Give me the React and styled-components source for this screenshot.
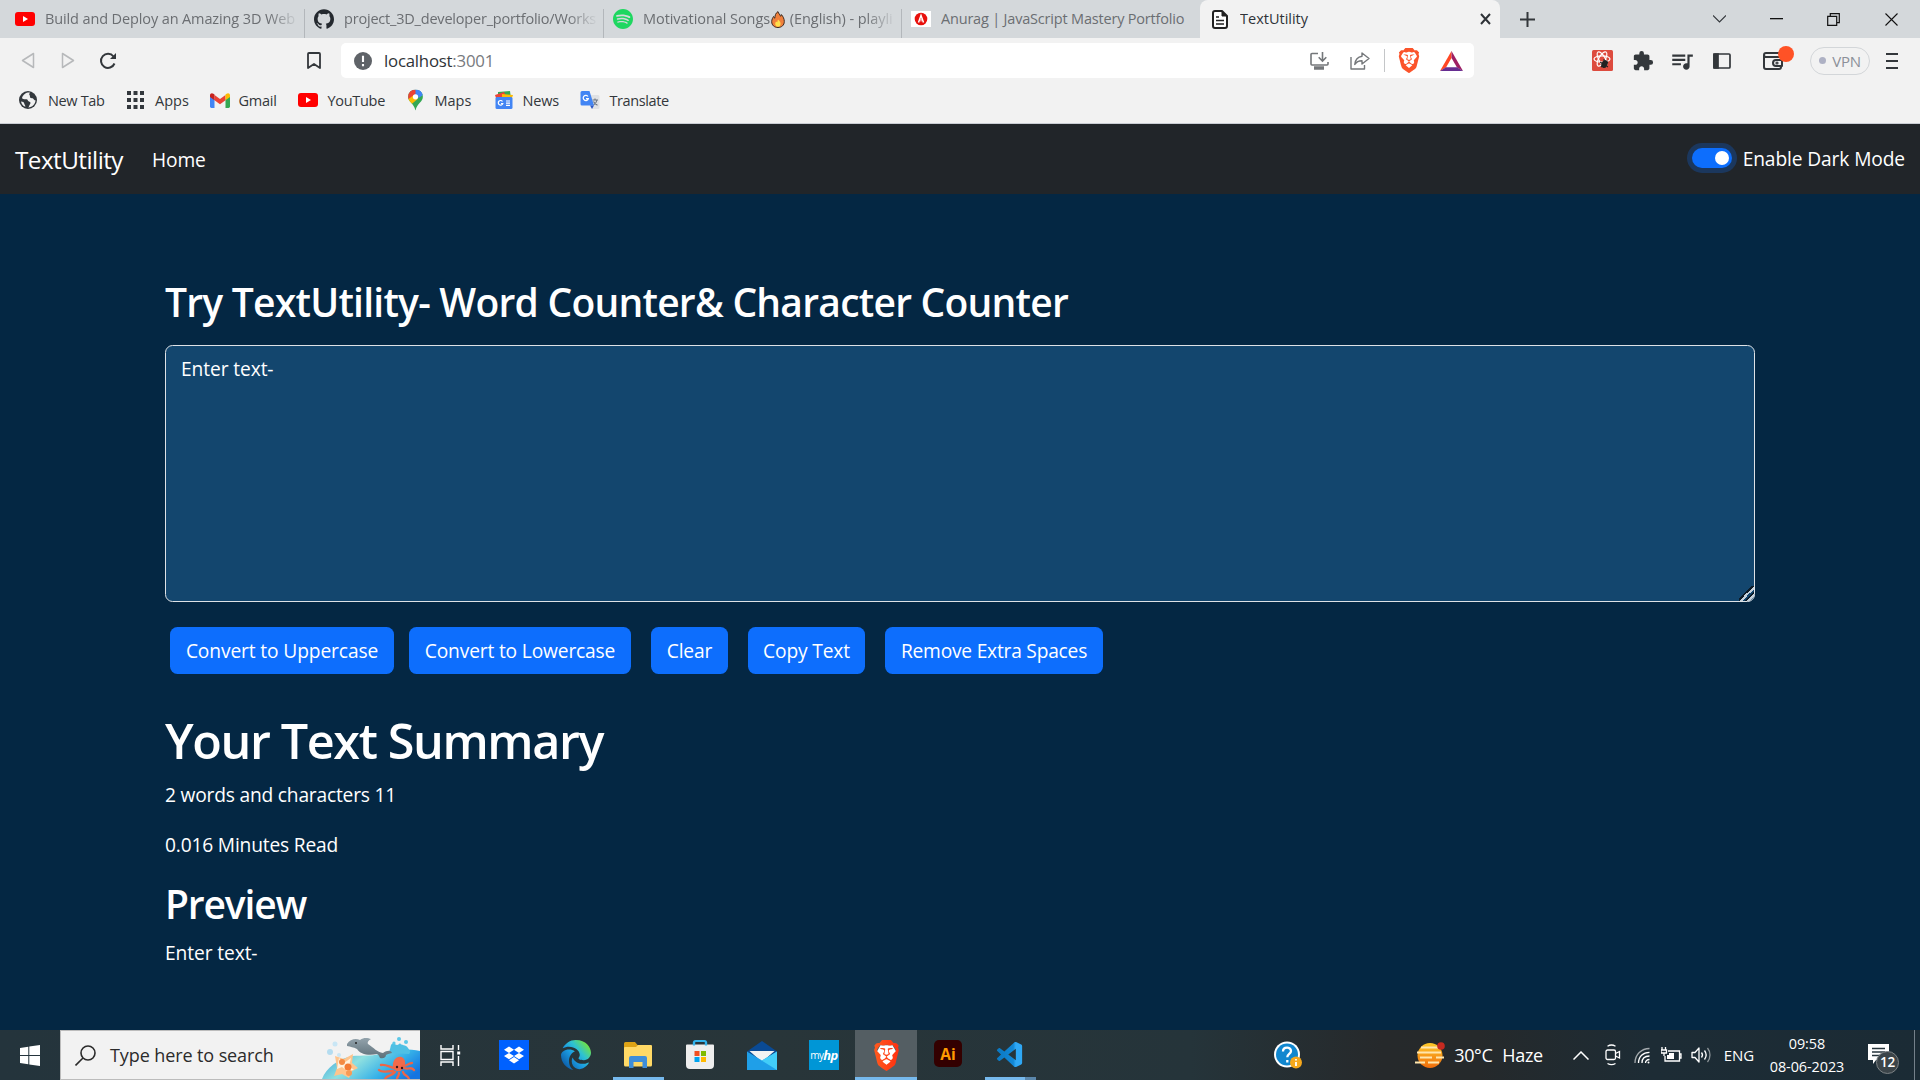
import React from "react";
import styled, { createGlobalStyle } from "styled-components";
import { SiBrave, SiGithub, SiSpotify, SiDropbox } from "react-icons/si";
import { FaEdge } from "react-icons/fa6";
import { VscVscode } from "react-icons/vsc";
import { MdExtension, MdQueueMusic } from "react-icons/md";

const GlobalStyle = createGlobalStyle`
  * { box-sizing: border-box; }
  html, body { margin: 0; padding: 0; }
  body {
    width: 1920px; height: 1080px; overflow: hidden; background: #042743;
    font-family: "Open Sans", "Noto Sans", sans-serif;
  }
  svg { display: block; flex: none; }
`;

const Screen = styled.div`
  width: 1920px;
  height: 1080px;
  display: flex;
  flex-direction: column;
  overflow: hidden;
`;

const Label = styled.span`
  font-size: ${(p) => p.$size}px;
  letter-spacing: ${(p) => p.$track || 0}px;
  color: ${(p) => p.$color || "inherit"};
  white-space: nowrap;
`;

/* ---------- browser chrome ---------- */

const Chrome = styled.header`
  height: 124px;
  flex: none;
  background: #f2f2f2;
  border-bottom: 1px solid #c9cdd3;
  color: #33373b;
`;

const TabStrip = styled.div`
  height: 38px;
  display: flex;
  background: #d4d8db;
`;

const Tab = styled.div`
  width: ${(p) => p.$width}px;
  flex: none;
  display: flex;
  align-items: center;
  gap: ${(p) => p.$gap || 10}px;
  padding: 0 ${(p) => p.$end || 5}px 0 ${(p) => p.$start}px;
  color: ${(p) => (p.$active ? "#2f3338" : "#6b6e72")};
  background: ${(p) => (p.$active ? "#f2f2f2" : "transparent")};
  border-radius: ${(p) => (p.$active ? "8px 8px 0 0" : "0")};
  overflow: hidden;
`;

const TabDivider = styled.i`
  width: 1px;
  height: 29px;
  margin: 9px -1px 0 0;
  background: #b3b7bb;
`;

const TabTitle = styled.div`
  flex: 1;
  min-width: 0;
  display: flex;
  align-items: center;
  overflow: hidden;
  font-size: 14.5px;
  line-height: 22px;
  letter-spacing: ${(p) => p.$track || 0}px;
  white-space: pre;
  mask-image: ${(p) => (p.$fade ? "linear-gradient(90deg, #000 88%, transparent)" : "none")};
`;

const WindowControls = styled.div`
  margin-left: auto;
  display: flex;
  align-items: center;
`;

const ControlSlot = styled.div`
  width: 57.3px;
  display: flex;
  justify-content: center;
`;

const NewTabButton = styled.div`
  display: flex;
  align-items: center;
`;

const Toolbar = styled.div`
  height: 45px;
  display: flex;
  align-items: center;
  padding-left: 21px;
`;

const Spacer = styled.i`
  flex: none;
  width: ${(p) => p.$w}px;
`;

const AddressBar = styled.div`
  width: 1133px;
  height: 35px;
  display: flex;
  align-items: center;
  padding: 0 11px 0 13px;
  background: #fff;
  border-radius: 5px;
`;

const AddressTools = styled.div`
  margin-left: auto;
  display: flex;
  align-items: center;
`;

const Separator = styled.i`
  width: 1px;
  height: 23px;
  background: #c4c6c8;
`;

const WalletButton = styled.div`
  position: relative;
`;

const WalletBadge = styled.i`
  position: absolute;
  left: 14.5px;
  top: -6px;
  width: 16px;
  height: 16px;
  border-radius: 50%;
  background: #ff5226;
`;

const VpnPill = styled.div`
  width: 60px;
  height: 28px;
  display: flex;
  align-items: center;
  justify-content: center;
  gap: 6px;
  border: 1.5px solid #d3d6d9;
  border-radius: 14px;
  color: #8b9099;
`;

const VpnDot = styled.i`
  width: 7px;
  height: 7px;
  border-radius: 50%;
  background: #aeb1c4;
`;

const BookmarksBar = styled.nav`
  height: 34px;
  display: flex;
  align-items: center;
  padding-left: 18px;
`;

const Bookmark = styled.div`
  width: ${(p) => p.$width}px;
  display: flex;
  align-items: center;
  gap: ${(p) => p.$gap || 9}px;
`;

/* ---------- page ---------- */

const Navbar = styled.nav`
  height: 70px;
  flex: none;
  display: flex;
  align-items: center;
  padding: 0 15px;
  background: #212529;
  color: #fff;
`;

const NavLink = styled.span`
  margin-right: 29px;
  font-size: ${(p) => p.$size}px;
  letter-spacing: ${(p) => p.$track}px;
`;

const ModeSwitch = styled.label`
  margin-left: auto;
  margin-bottom: 2px;
  display: flex;
  align-items: center;
  gap: 11px;
`;

const Track = styled.span`
  width: 40px;
  height: 20px;
  display: flex;
  justify-content: flex-end;
  align-items: center;
  padding-right: 3px;
  border-radius: 10px;
  background: #0d6efd;
  box-shadow: 0 0 0 5px rgba(13, 110, 253, 0.25);
`;

const Knob = styled.i`
  width: 14px;
  height: 14px;
  border-radius: 50%;
  background: #fff;
`;

const Content = styled.main`
  flex: 1;
  min-height: 0;
  padding: 84px 165px 0;
  color: #fff;
  background: #042743;
`;

const Heading = styled.h2`
  margin: 0 0 ${(p) => p.$after}px;
  height: ${(p) => p.$line}px;
  font-size: ${(p) => p.$size}px;
  line-height: ${(p) => p.$line}px;
  letter-spacing: ${(p) => p.$track}px;
  font-weight: 600;
  white-space: nowrap;
`;

const TextBox = styled.textarea`
  display: block;
  width: 1590px;
  height: 257px;
  margin: 0;
  padding: 7.5px 15px;
  border: 1px solid #dee2e6;
  border-radius: 7.5px;
  background: #13466e;
  color: #fff;
  font: 19.2px/30px "Open Sans", "Noto Sans", sans-serif;
  letter-spacing: -0.1px;
  outline: none;
  overflow: hidden;

  &::-webkit-resizer {
    background: linear-gradient(135deg, transparent 42%, #0c1a26 42% 50%, #c4d0da 50% 60%, #13466e 60% 68%, #0c1a26 68% 74%, #c4d0da 74% 86%, transparent 86%);
  }
`;

const ButtonRow = styled.div`
  display: flex;
  padding: 25px 0 35px 5px;
`;

const ActionButton = styled.button`
  width: ${(p) => p.$width}px;
  height: 47px;
  margin: 0 ${(p) => p.$after}px 0 0;
  padding: 0;
  border: 0;
  border-radius: 7.5px;
  background: #0d6efd;
  color: #fff;
  font: 19.2px/30px "Open Sans", "Noto Sans", sans-serif;
  letter-spacing: ${(p) => p.$track || 0}px;
  white-space: nowrap;
`;

const Line = styled.p`
  margin: 0 0 ${(p) => p.$after || 0}px;
  font-size: 19.2px;
  line-height: 30px;
  letter-spacing: ${(p) => p.$track || 0}px;
`;

/* ---------- taskbar ---------- */

const Taskbar = styled.footer`
  height: 50px;
  flex: none;
  display: flex;
  align-items: stretch;
  color: #fff;
  background: linear-gradient(90deg, #24343c 0%, #283539 40%, #25343a 62%, #26292b 72%, #25292b 77%, #1d2c35 86%, #1b2b35 100%);
`;

const StartButton = styled.div`
  width: 60px;
  display: flex;
  align-items: center;
  justify-content: center;
`;

const SearchBox = styled.div`
  width: 360px;
  display: flex;
  align-items: center;
  padding-left: 14px;
  background: #f2f2f2;
  border: 1px solid #bcbcbc;
  border-right: 0;
  color: #2b2b2b;
`;

const SearchArt = styled.div`
  margin-left: auto;
`;

const AppSlot = styled.div`
  width: 62px;
  display: flex;
  flex-direction: column;
  align-items: center;
  background: ${(p) => (p.$active ? "#545e63" : "transparent")};
`;

const AppIcon = styled.div`
  height: 47px;
  padding-top: 3px;
  display: flex;
  align-items: center;
`;

const Running = styled.i`
  width: ${(p) => p.$width}px;
  height: 3px;
  background: ${(p) => (p.$split ? "linear-gradient(90deg, #76b9ed 78%, #5b87ab 78%)" : "#76b9ed")};
`;

const HpTile = styled.div`
  width: 30px;
  height: 30px;
  display: flex;
  align-items: center;
  justify-content: center;
  background: #0096d6;
  font-size: 10px;
  letter-spacing: -0.6px;
  b { font-size: 13px; font-style: italic; }
`;

const AiTile = styled.div`
  width: 28px;
  height: 27px;
  margin-bottom: 3px;
  display: flex;
  align-items: center;
  justify-content: center;
  border-radius: 5px;
  background: #330000;
  color: #ff9a00;
  font-size: 15.5px;
  font-weight: 700;
`;

const Tray = styled.div`
  margin-left: auto;
  display: flex;
  align-items: center;
`;

const Clock = styled.div`
  width: 92px;
  display: flex;
  flex-direction: column;
  align-items: center;
  font-size: 14.4px;
  line-height: 23px;
  letter-spacing: -0.05px;
`;

const Notifications = styled.div`
  position: relative;
  width: 21px;
  margin-right: 25px;
  padding-bottom: 3px;
`;

const Count = styled.span`
  position: absolute;
  left: 8px;
  top: 7px;
  width: 23px;
  height: 23px;
  display: flex;
  align-items: center;
  justify-content: center;
  border-radius: 50%;
  border: 1px solid #7b8184;
  background: #3b4449;
  font-size: 13.5px;
  font-weight: 600;
  letter-spacing: -0.3px;
`;

const DesktopEdge = styled.i`
  align-self: stretch;
  width: 6px;
  border-left: 1px solid #74808a;
`;

/* ---------- drawings ---------- */

const YouTubeIcon = () => (
  <svg width="20" height="14" viewBox="0 0 20 14">
    <rect width="20" height="14" rx="3" fill="#f00" />
    <path d="M8 4l5 3-5 3z" fill="#fff" />
  </svg>
);

const FlameIcon = () => (
  <svg width="16" height="17" viewBox="-1 0 16 17">
    <path d="M7 .6c.6 2.2 2 3 2.600 4.700.5-.5.7-1.100.7-1.800 1.900 2 3 4.500 3 7 0 3.700-2.700 6-6.300 6S.700 14.200.700 10.700c0-2.300 1-3.800 1.800-5.200.3.800.7 1.300 1.300 1.700C3.900 4.700 4.600 2 7 .6z" fill="#f0803c" stroke="#3b2a20" strokeWidth="1" />
    <path d="M7 8.500c1.500 1.300 2.600 2.500 2.600 4.300S8.500 15.800 7 15.800s-2.800-1.200-2.800-3c0-1 .4-1.800 1-2.400.4.5.7.7 1.100.8.2-1 .3-1.800.7-2.700z" fill="#ffe04a" />
  </svg>
);

const PortfolioIcon = () => (
  <svg width="20" height="16" viewBox="0 0 20 16">
    <rect width="20" height="16" fill="#fff" />
    <circle cx="10" cy="8" r="6.300" fill="#e8100c" />
    <path d="M7.500 11.500L10 4.500l2.500 7" fill="none" stroke="#fff" strokeWidth="1.500" />
    <path d="M10 8v2.500" stroke="#fff" />
  </svg>
);

const FileIcon = () => (
  <svg width="16" height="19" viewBox="0 0 16 19" fill="none" stroke="#222" strokeWidth="2" strokeLinejoin="round">
    <path d="M10 1H3a2 2 0 0 0-2 2v13a2 2 0 0 0 2 2h10a2 2 0 0 0 2-2V6z" fill="#fff" />
    <path d="M10 1v5h5z" fill="#222" strokeWidth="1" />
    <path d="M4 7h3M4 10.500h8M4 14h8" strokeWidth="1.600" />
  </svg>
);

const GlobeIcon = () => (
  <svg width="20" height="20" viewBox="0 0 20 20">
    <circle cx="10" cy="10" r="9" fill="#33383d" />
    <path d="M11 2.500c-3 0-6 2-7 5.500 1 1.500 3 1.200 4.500 1.200C10 9.200 9.500 11 11 11.500c1.500.4 2 1.500 1 2.800-.8 1-.6 2.200-1.800 3.100 4-.1 7.200-3.200 7.300-7.200-1.200 0-1.800-.6-2.200-1.500-.5-.9-2.300-.3-3-1-.8-.9.1-1.800-.7-2.500-.7-.7-.3-1.700.4-2.700z" fill="#f2f2f2" />
    <path d="M3 11.500c2 0 3 .8 3.300 2.200.3 1.200 1.200 1.500 1 3.100C5 16 3.400 14 3 11.500z" fill="#f2f2f2" />
  </svg>
);

const AppsGrid = () => (
  <svg width="20" height="20" viewBox="0 0 20 20" fill="#33383d">
    {[1, 8, 15].map((y) => [1, 7.500, 14].map((x) => <rect key={x + "-" + y} x={x} y={y} width="4" height="4" />))}
  </svg>
);

const GmailIcon = () => (
  <svg width="20" height="15" viewBox="0 0 20 15">
    <path d="M0 2.500V13.500A1.400 1.400 0 0 0 1.400 15H4.500V6z" fill="#4285f4" />
    <path d="M20 2.500V13.500A1.400 1.400 0 0 1 18.600 15H15.500V6z" fill="#34a853" />
    <path d="M4.500 2v5.200L10 11.300l5.500-4.100V2L10 6.100z" fill="#ea4335" />
    <path d="M0 2.200C0 .3 2-.5 3.400.7L4.500 1.600v5.600L0 3.900z" fill="#c5221f" />
    <path d="M20 2.200C20 .3 18-.5 16.600.7l-1.100.9v5.600L20 3.900z" fill="#fbbc04" />
  </svg>
);

const MapsIcon = () => (
  <svg width="17" height="22" viewBox="1 0 16 20">
    <defs>
      <clipPath id="pin"><path d="M9 0a7 7 0 0 1 7 7c0 5-5.500 6-7 13C7.500 13 2 12 2 7a7 7 0 0 1 7-7z" /></clipPath>
    </defs>
    <g clipPath="url(#pin)">
      <rect width="18" height="20" fill="#34a853" />
      <path d="M9 7L20 0H8L4 2z" fill="#4285f4" />
      <path d="M0 0h9L9 4 3 10 0 7z" fill="#ea4335" />
      <path d="M1 10L8 5l3 4-7 6z" fill="#fbbc04" />
      <path d="M9 0h9v4l-6 4z" fill="#4285f4" />
    </g>
    <circle cx="9" cy="7" r="2.500" fill="#fff" />
  </svg>
);

const NewsIcon = () => (
  <svg width="20" height="18" viewBox="0 0 20 18">
    <path d="M4 1l12-1 1 8H4z" fill="#34a853" />
    <path d="M1 4l9-3 3 6H2z" fill="#ea4335" />
    <path d="M8 3l11 1-2 6H8z" fill="#fbbc04" />
    <rect x="1.500" y="6" width="17" height="12" rx="1.500" fill="#4285f4" />
    <path d="M8.500 10.500a2.300 2.300 0 1 0 .3 2H7M12 10h4M12 12.200h4M12 14.400h4" fill="none" stroke="#fff" strokeWidth="1.200" />
  </svg>
);

const TranslateIcon = () => (
  <svg width="20" height="20" viewBox="0 0 20 20">
    <path d="M8 5h10a1.500 1.500 0 0 1 1.500 1.500v11A1.500 1.500 0 0 1 18 19h-6z" fill="#dfe1e4" />
    <path d="M12.500 10h5.500M15 8.500V10M17 10c-.5 2.500-2 4-3.500 5M13.500 11.500c.8 1.800 2.200 3 4 3.700" fill="none" stroke="#6b7480" strokeWidth="1.100" />
    <path d="M2 1h7.500L14 15.500H2A1.500 1.500 0 0 1 .5 14V2.500A1.500 1.500 0 0 1 2 1z" fill="#4285f4" />
    <path d="M10 15.500h4L12 19z" fill="#2a56c6" />
    <path d="M8 6.500a2.600 2.600 0 1 0 .3 2.200H6" fill="none" stroke="#fff" strokeWidth="1.300" />
  </svg>
);

const BatIcon = () => (
  <svg width="23" height="20" viewBox="0 0 23 20">
    <path d="M11.500 0L0 20l6-3.500 5.500-9.500z" fill="#ff4724" />
    <path d="M11.500 0L23 20l-6-3.500-5.500-9.500z" fill="#9e1f63" />
    <path d="M0 20h23l-6-3.800H6z" fill="#662d91" />
  </svg>
);

const ReactExtensionIcon = () => (
  <svg width="21" height="21" viewBox="0 0 21 21">
    <rect width="21" height="21" rx="1.500" fill="#dd4b3e" />
    <g fill="none" stroke="#fff" strokeWidth="1.200">
      <ellipse cx="10" cy="9" rx="8" ry="3.200" />
      <ellipse cx="10" cy="9" rx="8" ry="3.200" transform="rotate(60 10 9)" />
      <ellipse cx="10" cy="9" rx="8" ry="3.200" transform="rotate(120 10 9)" />
    </g>
    <ellipse cx="12.500" cy="14" rx="3" ry="4" fill="#222" transform="rotate(25 12.500 14)" />
    <path d="M8 12l8 5M9 17l7-5M12 9l1 9" stroke="#222" strokeWidth="1.100" />
  </svg>
);

const SharedGradients = () => (
  <svg width="0" height="0" viewBox="0 0 1 1">
    <defs>
      <linearGradient id="edge" x1="0.100" y1="0.900" x2="0.900" y2="0.200">
        <stop offset="0" stopColor="#0c59a4" />
        <stop offset="0.450" stopColor="#1b9de2" />
        <stop offset="0.700" stopColor="#2fc3d0" />
        <stop offset="1" stopColor="#6be04e" />
      </linearGradient>
      <linearGradient id="code" x1="0" y1="0" x2="1" y2="0">
        <stop offset="0" stopColor="#0a78c2" />
        <stop offset="0.650" stopColor="#1288d6" />
        <stop offset="0.750" stopColor="#2fa8f5" />
      </linearGradient>
      <linearGradient id="brave" x1="0" y1="0" x2="1" y2="0">
        <stop offset="0" stopColor="#ff5a1f" />
        <stop offset="1" stopColor="#ff3010" />
      </linearGradient>
    </defs>
  </svg>
);

const BraveMark = ({ w, h, fill }) => (
  <svg width={w} height={h} viewBox="0 0 24 24" preserveAspectRatio="none">
    <path d="M7 4h10l3 5-3.500 9L12 21 7 18 4 9z" fill="#fff" />
    <SiBrave size={24} fill={fill} />
  </svg>
);

const SeaArt = () => (
  <svg width="98" height="48" viewBox="0 0 98 48">
    <defs>
      <linearGradient id="sea" x1="0" y1="0.300" x2="1" y2="0.700">
        <stop offset="0" stopColor="#3fa9dc" />
        <stop offset="0.350" stopColor="#8fe0e0" />
        <stop offset="0.700" stopColor="#36b1e8" />
        <stop offset="1" stopColor="#1474e0" />
      </linearGradient>
      <linearGradient id="dolphin" x1="0" y1="0" x2="0" y2="1">
        <stop offset="0" stopColor="#93a3ac" />
        <stop offset="1" stopColor="#5e7079" />
      </linearGradient>
    </defs>
    <path d="M0 48C4 37 16 28 30 25c10-1 22 1 35-4 8-4 23-3 33-1v28z" fill="url(#sea)" />
    <path d="M66 22c4-5 1-9 6-10 2 3 5 2 6 0 1 3 6 1 8 5 2 3 3 4 1 6z" fill="#4fc0e4" />
    <circle cx="77" cy="8" r="2" fill="#5cc8e8" /><circle cx="84" cy="11" r="2" fill="#5cc8e8" /><circle cx="72" cy="12" r="1.600" fill="#5cc8e8" />
    <circle cx="13" cy="13" r="2.500" fill="#c9e6f5" /><circle cx="8" cy="21" r="3" fill="#b4dcf0" /><circle cx="17" cy="24" r="2" fill="#c9e6f5" />
    <g transform="translate(0 2)">
      <path d="M25 11c3-5 9-6 13-4 4-3 8-2 11-1-2 1-4 3-3 5 6 4 9 8 15 9 4-3 8-3 9 0-3 1-5 1-6 2 0 2-2 4-6 3-1-2-1-3-3-4-9 2-17 0-20-5-4-2-6-2-10-3z" fill="url(#dolphin)" />
      <circle cx="34" cy="10" r="1" fill="#222" />
    </g>
    <path d="M13 25l9 3 9-5-1 9 6 5-6 3-3 7-7-4-8 2 3-8z" fill="#ffc48c" />
    <path d="M17 27l5 5 7-5-2 8 5 4-7 1-5-4-5 2z" fill="#fff1dc" />
    <circle cx="20" cy="31" r="3" fill="#f38a42" /><circle cx="26" cy="36" r="3.500" fill="#f47a32" /><circle cx="27" cy="42" r="3" fill="#f79a55" />
    <ellipse cx="77" cy="33" rx="6" ry="7.500" fill="#f26a4a" transform="rotate(20 77 33)" />
    <path d="M72 37c-5-1-8-4-13-3M71 40c-6 0-11 2-14-1M73 41c-3 4-8 3-10 7M77 42c0 3-2 4-2 6M81 41c1 4 5 3 6 7M82 37c4 2 7-2 10 2M81 35c5 0 5-3 9-3" fill="none" stroke="#ee6547" strokeWidth="2.300" strokeLinecap="round" />
    <circle cx="75" cy="36" r="1.200" fill="#3b1a1a" /><circle cx="80" cy="37" r="1.200" fill="#3b1a1a" />
  </svg>
);

const FolderIcon = () => (
  <svg width="28" height="28" viewBox="0 0 28 28">
    <path d="M0 2.500A1.500 1.500 0 0 1 1.500 1H11l2.500 3H27v6H0z" fill="#dda316" />
    <path d="M1 6h11l2-2h13a1 1 0 0 1 1 1v19a1.500 1.500 0 0 1-1.500 1.500h-25A1.500 1.500 0 0 1 0 24V7a1 1 0 0 1 1-1z" fill="#ffd966" />
    <path d="M5 27V17a2 2 0 0 1 2-2h14a2 2 0 0 1 2 2v10h-4.500v-6h-9v6z" fill="#3f8ed8" />
  </svg>
);

const StoreIcon = () => (
  <svg width="30" height="32" viewBox="0 0 30 32">
    <path d="M9 7V3.500A1.500 1.500 0 0 1 10.500 2h9A1.500 1.500 0 0 1 21 3.500V7" fill="none" stroke="#33b3ec" strokeWidth="2.200" />
    <path d="M2 5.500h26a1 1 0 0 1 1 1V26a4 4 0 0 1-4 4H5a4 4 0 0 1-4-4V6.500a1 1 0 0 1 1-1z" fill="#eee" />
    <path d="M9 6.500V3M21 6.500V3" stroke="#33b3ec" strokeWidth="2.200" />
    <rect x="9.500" y="12" width="5" height="5" fill="#f25022" /><rect x="16" y="12" width="5" height="5" fill="#7fba00" />
    <rect x="9.500" y="18" width="5" height="5" fill="#00a4ef" /><rect x="16" y="18" width="5" height="5" fill="#ffb900" />
  </svg>
);

const MailIcon = () => (
  <svg width="30" height="29" viewBox="0 0 30 29">
    <path d="M0 10.500L15 0l15 10.500L15 20z" fill="#0a4a94" />
    <path d="M2.500 10h25L15 21z" fill="#f3f3f3" />
    <path d="M0 10.500L15 19.500 30 10.500V29H0z" fill="#1f9fe8" />
    <path d="M30 10.500V29L12 17.800l3 1.700z" fill="#42cdf8" />
  </svg>
);

const HelpIcon = () => (
  <svg width="29" height="28" viewBox="0 0 29 28">
    <circle cx="13" cy="13.500" r="13" fill="#fff" />
    <circle cx="13" cy="13.500" r="11" fill="#1187cf" />
    <path d="M9 10.500c0-5 8-5 8-.5 0 3-3.700 3-3.700 6.300M13.300 19v2.500" fill="none" stroke="#fff" strokeWidth="2.300" />
    <circle cx="22" cy="21.500" r="6" fill="#f6a81c" />
    <path d="M22 18v1.500M22 21v4" stroke="#fff" strokeWidth="1.800" />
  </svg>
);

const WeatherIcon = () => (
  <svg width="30" height="27" viewBox="0 0 30 27">
    <defs>
      <linearGradient id="sun" x1="0" y1="0" x2="0" y2="1"><stop stopColor="#ffc928" /><stop offset="1" stopColor="#ef6c0c" /></linearGradient>
    </defs>
    <circle cx="15" cy="13.500" r="12.500" fill="url(#sun)" />
    <path d="M6 5.500h17M2 10.500h24M5 15.500h12M0 20.500h10M13 20.500h11M21 15.500h8" stroke="#ffe6ad" strokeWidth="1.900" />
    <circle cx="26" cy="4" r="3.800" fill="#c62a20" />
  </svg>
);

const stroke = (w = 1.3) => ({ fill: "none", stroke: "currentColor", strokeWidth: w });

const tabs = [
  { title: "Build and Deploy an Amazing 3D Web", icon: <YouTubeIcon />, width: 304, start: 15, track: -0.12, fade: true },
  { title: "project_3D_developer_portfolio/Works", icon: <SiGithub size={20} color="#24292f" />, width: 299, start: 10, track: -0.2, fade: true },
  { title: "Motivational Songs", emoji: true, rest: " (English) - playli", icon: <SiSpotify size={20} color="#1ed760" />, width: 298, start: 10, track: -0.06, fade: true },
  { title: "Anurag | JavaScript Mastery Portfolio", icon: <PortfolioIcon />, width: 299, start: 10, track: -0.19 },
];

const bookmarks = [
  { name: "New Tab", icon: <GlobeIcon />, width: 107.5, track: -0.35, gap: 10 },
  { name: "Apps", icon: <AppsGrid />, width: 84, track: 0, gap: 9.5 },
  { name: "Gmail", icon: <GmailIcon />, width: 88, track: -0.25 },
  { name: "YouTube", icon: <YouTubeIcon />, width: 109, track: -0.3, gap: 10 },
  { name: "Maps", icon: <MapsIcon />, width: 87, track: 0, gap: 11 },
  { name: "News", icon: <NewsIcon />, width: 86, track: -0.15 },
  { name: "Translate", icon: <TranslateIcon />, width: 110, track: -0.4, gap: 10 },
];

const actions = [
  { name: "Convert to Uppercase", width: 224, after: 15, track: -0.12 },
  { name: "Convert to Lowercase", width: 222, after: 20, track: -0.16 },
  { name: "Clear", width: 77, after: 20, track: -0.1 },
  { name: "Copy Text", width: 117, after: 20, track: -0.15 },
  { name: "Remove Extra Spaces", width: 218, after: 0, track: -0.22 },
];

const apps = [
  { id: "dropbox", icon: <svg width="30" height="30" viewBox="0 0 30 30"><rect width="30" height="30" fill="#0061ff" /><SiDropbox x="5" y="5" size={20} color="#fff" /></svg> },
  { id: "edge", icon: <FaEdge size={30} fill="url(#edge)" /> },
  { id: "files", icon: <FolderIcon />, running: 51 },
  { id: "store", icon: <StoreIcon /> },
  { id: "mail", icon: <MailIcon /> },
  { id: "hp", icon: <HpTile>my<b>hp</b></HpTile> },
  { id: "brave", icon: <BraveMark w={29} h={31} fill="url(#brave)" />, running: 62, active: true },
  { id: "ai", icon: <AiTile>Ai</AiTile> },
  { id: "code", icon: <VscVscode size={31} fill="url(#code)" />, running: 51, split: true },
];

function BrowserChrome() {
  return (
    <Chrome>
      <TabStrip>
        {tabs.map((t, i) => (
          <React.Fragment key={t.title}>
            <Tab $width={t.width} $start={t.start}>
              {t.icon}
              <TabTitle $track={t.track} $fade={t.fade}>
                {t.title}
                {t.emoji && <FlameIcon />}
                {t.rest}
              </TabTitle>
            </Tab>
            {i < 3 && <TabDivider />}
          </React.Fragment>
        ))}
        <Tab $active $width={300} $start={12} $gap={12} $end={8}>
          <FileIcon />
          <TabTitle>TextUtility</TabTitle>
          <svg width="14" height="12" viewBox="0 0 14 12" {...stroke(2)}><path d="M3 1l9 10M12 1L3 11" /></svg>
        </Tab>
        <Spacer $w={20} />
        <NewTabButton>
          <svg width="15" height="15" viewBox="0 0 15 15" {...stroke(2)}><path d="M7.500 0v15M0 7.500h15" /></svg>
        </NewTabButton>
        <WindowControls>
          <ControlSlot><svg width="13" height="8" viewBox="0 0 13 8" {...stroke(1.1)}><path d="M0 .5l6.500 6.500L13 .5" /></svg></ControlSlot>
          <ControlSlot><svg width="13" height="2" viewBox="0 0 13 2"><rect width="13" height="1.300" fill="#111" /></svg></ControlSlot>
          <ControlSlot><svg width="14" height="13" viewBox="0.500 0 14 13" {...stroke(1.2)} color="#111"><path d="M1.200 3.300h9v9h-9zM3.800 3V.7h9v9h-2.300" /></svg></ControlSlot>
          <ControlSlot><svg width="13" height="13" viewBox="0 0 13 13" {...stroke(1.1)} color="#111"><path d="M.5.5l12 12M12.500.5l-12 12" /></svg></ControlSlot>
        </WindowControls>
      </TabStrip>
      <Toolbar>
        <svg width="14" height="17" viewBox="0 0 14 17" {...stroke(1.5)} color="#b7b9bb"><path d="M12.500 1.500v14L1.500 8.500z" strokeLinejoin="round" /></svg>
        <Spacer $w={26} />
        <svg width="14" height="17" viewBox="0 0 14 17" {...stroke(1.5)} color="#b7b9bb"><path d="M1.500 1.500v14l11-7z" strokeLinejoin="round" /></svg>
        <Spacer $w={24} />
        <svg width="18" height="18" viewBox="0 0 18 18" {...stroke(2)}><path d="M15.500 11.500A7 7 0 1 1 14.500 4.500" /><path d="M17 1v6h-6z" fill="currentColor" stroke="none" /></svg>
        <Spacer $w={190} />
        <svg width="14" height="17" viewBox="0 0 14 17" {...stroke(1.8)}><path d="M1 2a1 1 0 0 1 1-1h10a1 1 0 0 1 1 1v14l-6-4-6 4z" strokeLinejoin="round" /></svg>
        <Spacer $w={20} />
        <AddressBar>
          <svg width="18" height="18" viewBox="0 0 18 18"><circle cx="9" cy="9" r="9" fill="#5f6368" /><path d="M9 3.800v6.200M9 12v2.200" stroke="#fff" strokeWidth="2.100" /></svg>
          <Spacer $w={12} />
          <Label $size={16.8} $track={-0.22} $color="#2f3338">localhost<Label as="span" $size={16.8} $track={-0.22} $color="#777a7e">:3001</Label></Label>
          <AddressTools>
            <svg width="19" height="18" viewBox="0 0 19 18" {...stroke(1.6)} color="#74777a"><path d="M8 1.500H2a1 1 0 0 0-1 1V12a1 1 0 0 0 1 1h15a1 1 0 0 0 1-1v-2M12.500 0v8.500M8.700 5.300l3.800 3.800 3.800-3.800" /><path d="M4 16h10" strokeWidth="3.500" /></svg>
            <Spacer $w={21} />
            <svg width="20" height="18" viewBox="0 0 20 18" {...stroke(1.4)} color="#74777a"><path d="M1 5v12h13.500v-4M12 1l7 5.500-7 5.500V8.800C8.500 8.800 6.300 10 4.800 12.500 5.300 7.800 8 4.800 12 4.300z" strokeLinejoin="round" /></svg>
            <Spacer $w={14} />
            <Separator />
            <Spacer $w={12} />
            <BraveMark w={24} h={25} fill="#fb542b" />
            <Spacer $w={19} />
            <BatIcon />
          </AddressTools>
        </AddressBar>
        <Spacer $w={118} />
        <ReactExtensionIcon />
        <Spacer $w={19} />
        <MdExtension size={22} />
        <Spacer $w={15} />
        <MdQueueMusic size={26} />
        <Spacer $w={18} />
        <svg width="18" height="16" viewBox="0 0 18 16" {...stroke(1.7)}><rect x="1" y="1" width="16" height="14" rx="1" /><path d="M1 1h4v14H1z" fill="currentColor" /></svg>
        <Spacer $w={32} />
        <WalletButton>
          <svg width="21" height="18" viewBox="0 0 21 18" {...stroke(2)}><path d="M18 6V5H3a2 2 0 0 1 0-4h13M1 3v12a2 2 0 0 0 2 2h13a2 2 0 0 0 2-2v-1M19 8h-6a3 3 0 0 0 0 6h6z" strokeLinejoin="round" /><circle cx="14" cy="11" r=".6" /></svg>
          <WalletBadge />
        </WalletButton>
        <Spacer $w={26} />
        <VpnPill><VpnDot /><Label $size={15} $track={-0.2}>VPN</Label></VpnPill>
        <Spacer $w={16} />
        <svg width="12" height="16" viewBox="0 0 12 16" {...stroke(1.8)}><path d="M0 1h12M0 8h12M0 15h12" /></svg>
      </Toolbar>
      <BookmarksBar>
        {bookmarks.map((b) => (
          <Bookmark key={b.name} $width={b.width} $gap={b.gap}>{b.icon}<Label $size={14.5} $track={b.track}>{b.name}</Label></Bookmark>
        ))}
      </BookmarksBar>
    </Chrome>
  );
}

function Page() {
  return (
    <>
      <Navbar>
        <NavLink $size={24.3} $track={-0.55}>TextUtility</NavLink>
        <NavLink $size={19.2} $track={-0.1}>Home</NavLink>
        <ModeSwitch>
          <Track><Knob /></Track>
          <Label $size={19.2} $track={-0.12}>Enable Dark Mode</Label>
        </ModeSwitch>
      </Navbar>
      <Content>
        <Heading $size={39} $line={48} $track={-0.76} $after={19}>Try TextUtility- Word Counter&amp; Character Counter</Heading>
        <TextBox readOnly defaultValue="Enter text-" />
        <ButtonRow>
          {actions.map((a) => (
            <ActionButton key={a.name} $width={a.width} $after={a.after} $track={a.track}>{a.name}</ActionButton>
          ))}
        </ButtonRow>
        <Heading as="h1" $size={48.5} $line={62} $track={-1.38} $after={9}>Your Text Summary</Heading>
        <Line $after={20} $track={-0.2}>2 words and characters 11</Line>
        <Line $after={20} $track={-0.18}>0.016 Minutes Read</Line>
        <Heading $size={39} $line={48} $track={-1.15} $after={10}>Preview</Heading>
        <Line $track={-0.1}>Enter text-</Line>
      </Content>
    </>
  );
}

function WindowsTaskbar() {
  return (
    <Taskbar>
      <StartButton>
        <svg width="20" height="21" viewBox="0 0 20 21" fill="#fff"><path d="M0 3l8.300-1.200V10H0zM9.300 1.600L20 0v10H9.300zM0 11h8.300v8.200L0 18zM9.300 11H20v10L9.300 19.400z" /></svg>
      </StartButton>
      <SearchBox>
        <svg width="21" height="21" viewBox="0 0 21 21" {...stroke(1.6)}><circle cx="13" cy="8" r="7" /><path d="M8 13L.5 20.500" /></svg>
        <Spacer $w={14} />
        <Label $size={18} $track={-0.1}>Type here to search</Label>
        <SearchArt><SeaArt /></SearchArt>
      </SearchBox>
      <AppSlot>
        <AppIcon><svg width="23" height="21" viewBox="0 0 23 21" {...stroke(1.4)}><path d="M1 0v4h12V0M1 21v-4h12v4M1 6.500h12v8H1zM18.500 0v5M18.500 11v10" /><rect x="17.200" y="6.500" width="3" height="3" fill="#fff" stroke="none" /></svg></AppIcon>
      </AppSlot>
      <Spacer $w={1} />
      {apps.map((a) => (
        <AppSlot key={a.id} $active={a.active}>
          <AppIcon>{a.icon}</AppIcon>
          {a.running && <Running $width={a.running} $split={a.split} />}
        </AppSlot>
      ))}
      <Tray>
        <HelpIcon />
        <Spacer $w={112} />
        <WeatherIcon />
        <Spacer $w={9} />
        <Label $size={18} $track={-0.4}>30°C</Label>
        <Spacer $w={10} />
        <Label $size={18} $track={-0.35}>Haze</Label>
        <Spacer $w={30} />
        <svg width="16" height="9" viewBox="0 0 16 9" {...stroke(1.5)}><path d="M.5 8.500L8 1l7.500 7.500" /></svg>
        <Spacer $w={16} />
        <svg width="16" height="24" viewBox="0 -2 16 24" {...stroke(1.3)}><rect x="1" y="5" width="9.500" height="9.500" rx="1.500" /><path d="M10.500 8.500L14.500 6.500v6.500l-4-2M2.500 1.200c2.500-1.500 5.500-1.500 8 0M2.500 18.500c2.500 1.500 5.500 1.500 8 0" /></svg>
        <Spacer $w={13} />
        <svg width="16" height="17" viewBox="0 0 16 17" {...stroke(1.3)}><path d="M1 16C1 7.500 7.500 1.500 15.500 1.500" opacity=".6" /><path d="M4.500 16C4.500 9.500 9 5.300 15.500 5.300M8 16c0-4.500 3-7 7.500-7M11.500 16c0-2.200 1.500-3.500 4-3.500" /><circle cx="14.500" cy="15.500" r="1" fill="#fff" stroke="none" /></svg>
        <Spacer $w={11} />
        <svg width="21" height="16" viewBox="0 0 21 16" {...stroke(1.3)}><path d="M7 4h11.500v10H4V9M18.500 7H20v4h-1.500M1 0v3M4.500 0v3M0 3h5.500v3H0zM3 6v3" /><path d="M8 6h5v6H6V8h2z" fill="#fff" stroke="none" /></svg>
        <Spacer $w={9} />
        <svg width="21" height="18" viewBox="0 0 21 18" {...stroke(1.3)}><path d="M1 6.500h3L8 2v14l-4-4.500H1zM10.500 6.500c1.200 1.500 1.200 3.500 0 5M13.500 4.500c2 2.700 2 6.300 0 9" strokeLinejoin="round" /><path d="M16.500 2c3.300 4 3.300 10 0 14" opacity=".5" /></svg>
        <Spacer $w={12} />
        <Label $size={15} $track={-0.1}>ENG</Label>
        <Spacer $w={7} />
        <Clock><span>09:58</span><span>08-06-2023</span></Clock>
        <Spacer $w={15} />
        <Notifications>
          <svg width="21" height="20" viewBox="0 0 21 20"><path d="M0 0h21v16H8l-3 4v-4H0z" fill="#fff" /><path d="M4 4.500h13M4 8h13M4 11.500h13" stroke="#26343c" strokeWidth="1.300" /></svg>
          <Count>12</Count>
        </Notifications>
        <DesktopEdge />
      </Tray>
    </Taskbar>
  );
}

export default function App() {
  return (
    <Screen>
      <GlobalStyle />
      <BrowserChrome />
      <Page />
      <WindowsTaskbar />
      <SharedGradients />
    </Screen>
  );
}
